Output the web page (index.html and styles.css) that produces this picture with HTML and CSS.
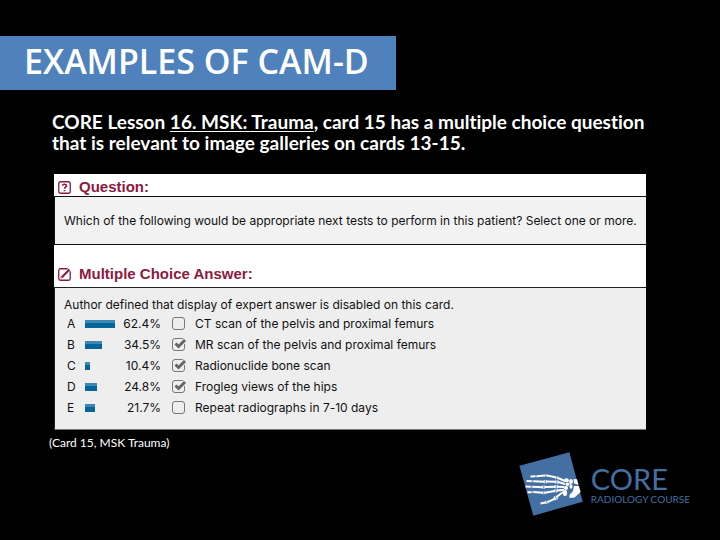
FILE: index.html
```html
<!DOCTYPE html>
<html lang="en">
<head>
<meta charset="utf-8">
<meta name="viewport" content="width=device-width, initial-scale=1">
<title>Examples of CAM-D</title>
<link rel="stylesheet" href="styles.css">
</head>
<body>
<main class="slide">
  <h1 class="title">EXAMPLES OF CAM-D</h1>
  <p class="intro">CORE Lesson <u>16. MSK: Trauma</u>, card 15 has a multiple choice question that is relevant to image galleries on cards 13-15.</p>

  <section class="panel">
    <h2 class="heading">
      <svg class="heading-icon" viewBox="0 0 12 12" aria-hidden="true">
        <rect x="0.7" y="0.7" width="10.6" height="10.6" rx="1.8"/>
        <path d="M4.2 4.4C4.3 2.6 7.8 2.5 7.8 4.4C7.8 5.6 6 5.6 6 7.1M6 8.2V9.5" stroke-width="1.5"/>
      </svg>
      Question:
    </h2>
    <p class="question">Which of the following would be appropriate next tests to perform in this patient? Select one or more.</p>
    <h2 class="heading heading-answer">
      <svg class="heading-icon" viewBox="0 0 12 12" aria-hidden="true">
        <path d="M9 0.7H2.2Q0.7 0.7 0.7 2.2V9.8Q0.7 11.3 2.2 11.3H9.8Q11.3 11.3 11.3 9.8V3"/>
        <path d="M3.7 8.3L10.6 1.4" stroke-width="2"/>
        <path d="M2.6 9.4L3.2 7.4L4.6 8.8Z" stroke-width="0.6"/>
      </svg>
      Multiple Choice Answer:
    </h2>
    <div class="answers">
      <p class="note">Author defined that display of expert answer is disabled on this card.</p>
      <ul class="options">
        <li class="option">
          <span>A</span><span class="track"><span class="bar" style="width:62.4%"></span></span><span class="percent">62.4%</span>
          <span class="tick"><input type="checkbox" id="a"></span><label for="a">CT scan of the pelvis and proximal femurs</label>
        </li>
        <li class="option">
          <span>B</span><span class="track"><span class="bar" style="width:34.5%"></span></span><span class="percent">34.5%</span>
          <span class="tick"><input type="checkbox" id="b" checked><svg viewBox="0 0 15 13" aria-hidden="true"><path class="halo" d="M3.5 5.5L6.5 8.5L13 2"/><path d="M3.5 5.5L6.5 8.5L13 2"/></svg></span><label for="b">MR scan of the pelvis and proximal femurs</label>
        </li>
        <li class="option">
          <span>C</span><span class="track"><span class="bar" style="width:10.4%"></span></span><span class="percent">10.4%</span>
          <span class="tick"><input type="checkbox" id="c" checked><svg viewBox="0 0 15 13" aria-hidden="true"><path class="halo" d="M3.5 5.5L6.5 8.5L13 2"/><path d="M3.5 5.5L6.5 8.5L13 2"/></svg></span><label for="c">Radionuclide bone scan</label>
        </li>
        <li class="option">
          <span>D</span><span class="track"><span class="bar" style="width:24.8%"></span></span><span class="percent">24.8%</span>
          <span class="tick"><input type="checkbox" id="d" checked><svg viewBox="0 0 15 13" aria-hidden="true"><path class="halo" d="M3.5 5.5L6.5 8.5L13 2"/><path d="M3.5 5.5L6.5 8.5L13 2"/></svg></span><label for="d">Frogleg views of the hips</label>
        </li>
        <li class="option">
          <span>E</span><span class="track"><span class="bar" style="width:21.7%"></span></span><span class="percent">21.7%</span>
          <span class="tick"><input type="checkbox" id="e"></span><label for="e">Repeat radiographs in 7-10 days</label>
        </li>
      </ul>
    </div>
  </section>
  <p class="caption">(Card 15, MSK Trauma)</p>

  <footer class="brand">
    <svg class="mark" viewBox="0 0 64 64" aria-hidden="true">
      <path class="tile" d="M0.4 13.7L50.4 0.3L63.7 49.7L14.3 63.7Z"/>
      <g class="fingers">
        <path d="M11.5 24.5L16 24.3M18 24.2L25.5 23.6M28 23.5L36.5 25.2M39 26L46 29"/>
        <path d="M7.5 29L12.5 29.3M15 29.3L25 29.8M27.5 29.5L36.5 29.7M39 30L46 32"/>
        <path d="M6.5 34.5L11 34.8M13.5 34.8L23.5 35.2M26 35L36 34.7M38.5 34.7L45.5 35"/>
        <path d="M8.5 40.3L12.5 40.2M15 40L23.5 40.8M26 40.7L35.5 39M38 38.6L45 37.7"/>
        <path d="M21.5 51.5L26.5 50.5M29 49.8L35.5 46.8M37.5 45L44 40"/>
      </g>
      <g class="joints">
        <circle cx="17" cy="24.3" r="1.2"/><circle cx="26.7" cy="23.5" r="1.6"/><circle cx="37.8" cy="25.7" r="1.8"/>
        <circle cx="13.8" cy="29.2" r="1.3"/><circle cx="26.2" cy="29.7" r="1.9"/><circle cx="37.8" cy="30" r="1.9"/>
        <circle cx="12.3" cy="34.8" r="1.4"/><circle cx="24.8" cy="35.1" r="1.9"/><circle cx="37.2" cy="34.7" r="2"/>
        <circle cx="13.8" cy="40.1" r="1.3"/><circle cx="24.8" cy="40.8" r="1.8"/><circle cx="36.8" cy="38.8" r="1.9"/>
        <circle cx="27.7" cy="50.2" r="1.8"/><circle cx="36.7" cy="46" r="2.2"/>
        <ellipse cx="47.5" cy="28.3" rx="2.4" ry="2"/><ellipse cx="48.5" cy="32.3" rx="2" ry="1.7"/>
        <ellipse cx="47" cy="36" rx="2" ry="1.9"/><ellipse cx="46" cy="41" rx="2.2" ry="3"/>
        <ellipse cx="52" cy="29.5" rx="1.9" ry="2.5"/><ellipse cx="52" cy="34.5" rx="1.5" ry="2.2"/>
        <path d="M54.5 27L58 27.3L59.6 33L55 31.3Z"/>
        <path d="M55 34L59.9 34L61.6 40L55.5 45.5L50.5 46L50.5 43L54 39Z"/>
      </g>
      <path class="gaps" d="M17 22V26.5M26.8 21V26.5M37.8 22.5V28M13.8 27V32M26.2 27V32.5M37.8 27.5V32.5M12.3 32.5V37.5M24.8 32.5V38M37.2 32V37.5M13.8 38V42.5M24.8 38.5V43.5M36.8 36V41.5M27.2 47.5L28.4 52.5M35.5 43L38 48"/>
    </svg>
    <div class="wordmark">
      <span class="brand-name">CORE</span>
      <span class="brand-sub">RADIOLOGY COURSE</span>
    </div>
  </footer>
</main>
</body>
</html>
```
FILE: styles.css
```css
* {
  box-sizing: border-box;
}

body {
  margin: 0;
  background: #000;
  color: #fff;
  font-family: Lato, "Open Sans", sans-serif;
  font-variant-ligatures: none;
}

h1, h2, p, ul {
  margin: 0;
  padding: 0;
}

.slide {
  padding-top: 36px;
}

.title {
  width: 55%;
  padding: 0 0 4px 24px;
  background: #4f81bd;
  font-family: "Open Sans", "Noto Sans", sans-serif;
  font-size: 34px;
  font-weight: 600;
  line-height: 50px;
  white-space: nowrap;
}

.intro {
  margin: 21px 64px 0 52px;
  font-size: 19px;
  font-weight: 700;
  line-height: 21px;
}

.intro u {
  text-underline-offset: 2px;
}

.panel {
  margin: 21px 74px 0 54px;
  background: #fff;
  color: #111;
  font-family: Inter, "Liberation Sans", Arial, sans-serif;
  font-size: 12px;
}

.heading {
  display: flex;
  align-items: center;
  gap: 8px;
  padding: 4px 4px 0;
  color: #8c1a40;
  font-family: "Liberation Sans", Arial, sans-serif;
  font-size: 15px;
  line-height: 18px;
}

.heading-answer {
  padding: 20px 4px 4px;
}

.heading-icon {
  width: 13px;
  height: 13px;
  fill: none;
  stroke: #8c1a40;
  stroke-width: 1.2;
}

.question {
  padding: 16px 9px 15px;
  border: 1px solid #111;
  border-right: 0;
  background: #f2f2f2;
  line-height: 16px;
}

.answers {
  padding: 9px 9px 11px;
  border: 1px solid #222;
  border-right: 0;
  border-bottom-color: #777;
  background: #eee;
}

.note {
  line-height: 16px;
}

.options {
  list-style: none;
}

.option {
  display: grid;
  grid-template-columns: 18px 36px 40px 34px 1fr;
  align-items: center;
  padding-left: 3px;
  height: 21px;
}

.track {
  width: 48px;
}

.bar {
  display: block;
  height: 8px;
  background: linear-gradient(#3f87b3 0 40%, #04659b 40%);
}

.percent {
  text-align: right;
}

.tick {
  position: relative;
  height: 13px;
  margin-left: 11px;
}

.tick input {
  appearance: none;
  display: block;
  width: 13px;
  height: 13px;
  margin: 0;
  border: 1px solid #777;
  border-radius: 3px;
}

.tick svg {
  position: absolute;
  top: 0;
  left: 0;
  width: 15px;
  height: 13px;
  fill: none;
  stroke: #666;
  stroke-width: 3;
  pointer-events: none;
}

.tick .halo {
  stroke: #eee;
  stroke-width: 5;
}

.caption {
  margin: 5px 0 0 49px;
  font-size: 12px;
  line-height: 16px;
}

.brand {
  display: flex;
  align-items: flex-start;
  justify-content: flex-end;
  gap: 8px;
  padding-right: 30px;
}

.mark {
  width: 64px;
  height: 64px;
  margin-top: 1px;
}

.tile {
  fill: #446fa3;
}

.fingers {
  fill: none;
  stroke: #fff;
  stroke-width: 2;
}

.joints {
  fill: #fff;
}

.gaps {
  fill: none;
  stroke: #446fa3;
  stroke-width: 0.8;
}

.wordmark {
  display: flex;
  flex-direction: column;
  padding-top: 13px;
  color: #446fa3;
}

.brand-name {
  font-size: 29px;
  line-height: 30px;
}

.brand-sub {
  font-size: 10px;
  line-height: 10px;
}
```
